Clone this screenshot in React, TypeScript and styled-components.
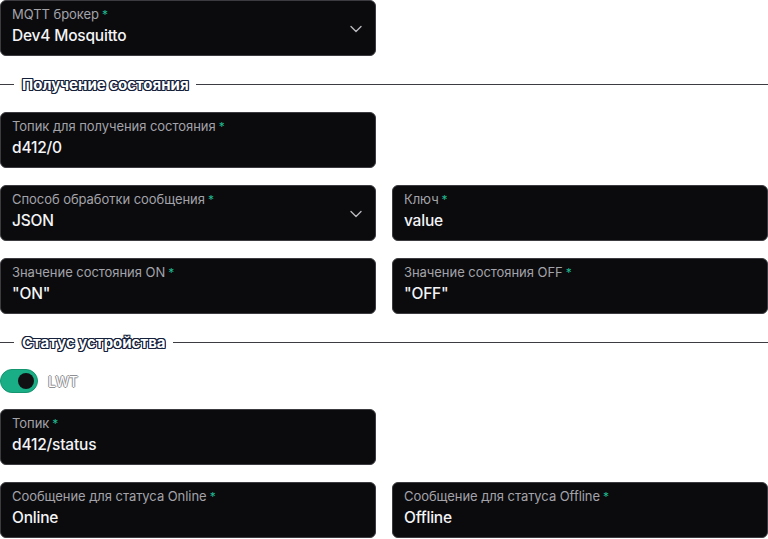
import React from "react";
import styled, { createGlobalStyle } from "styled-components";

const Global = createGlobalStyle`
  html, body { margin: 0; padding: 0; background: #ffffff; }
  body { font-family: Inter, "Noto Sans", sans-serif; }
`;

const Page = styled.div`
  width: 768px;
  display: flex;
  flex-direction: column;
`;

const Row = styled.div`
  display: grid;
  grid-template-columns: 376px 376px;
  column-gap: 16px;
  margin-bottom: 17px;
`;

const Field = styled.div`
  position: relative;
  box-sizing: border-box;
  height: 56px;
  background: #0b0b0e;
  border: 1px solid #3b3b40;
  border-radius: 6px;
  padding: 5px 11px 0 11px;
  display: flex;
  flex-direction: column;
`;

const Label = styled.div`
  font-size: 13px;
  line-height: 17px;
  color: #a3a3a9;
  letter-spacing: -0.05px;
  white-space: nowrap;
`;

const Star = styled.span`
  color: #1fb98e;
  margin-left: 3px;
  font-size: 12px;
`;

const Value = styled.div`
  margin-top: 3px;
  font-size: 15.5px;
  line-height: 20px;
  font-weight: 500;
  color: #f4f4f6;
  letter-spacing: -0.2px;
`;

const Chevron = styled.svg`
  position: absolute;
  right: 12px;
  top: 21px;
  width: 14px;
  height: 14px;
`;

const Section = styled.div`
  display: flex;
  align-items: center;
  height: 22px;
  margin-bottom: 17px;
`;

const Line = styled.div<{ $grow?: boolean }>`
  height: 1px;
  background: #3c3c42;
  width: 14px;
  flex: ${(p) => (p.$grow ? "1" : "none")};
`;

const SectionTitle = styled.div`
  padding: 0 7px 0 8px;
  font-size: 15px;
  font-weight: 700;
  letter-spacing: 0px;
  color: #ffffff;
  white-space: nowrap;
  text-shadow: -1px 0 #15203a, 1px 0 #15203a, 0 1px #15203a, 0 -1px #15203a,
    1px 1px #15203a, -1px -1px #15203a, 1px -1px #15203a, -1px 1px #15203a;
`;

const ToggleRow = styled.div`
  display: flex;
  align-items: center;
  gap: 10px;
  height: 24px;
  margin-top: -1px;
  margin-bottom: 16px;
`;

const Toggle = styled.div`
  position: relative;
  width: 38px;
  height: 24px;
  border-radius: 12px;
  background: #1aae86;
  box-sizing: border-box;
  border: 1px solid #14946f;
`;

const Knob = styled.div`
  position: absolute;
  right: 3px;
  top: 3px;
  width: 16px;
  height: 16px;
  border-radius: 50%;
  background: #111114;
`;

const ToggleLabel = styled.div`
  font-size: 14px;
  color: #ffffff;
  letter-spacing: -0.3px;
  text-shadow: -1px 0 #8f8f94, 1px 0 #8f8f94, 0 1px #8f8f94, 0 -1px #8f8f94;
`;

const ChevronIcon = () => (
  <Chevron viewBox="0 0 14 14" fill="none">
    <path d="M2 4.5 L7 9.5 L12 4.5" stroke="#b9b9be" strokeWidth="1.4" strokeLinecap="round" strokeLinejoin="round" />
  </Chevron>
);

const F = ({ label, value, select }: { label: string; value: string; select?: boolean }) => (
  <Field>
    <Label>
      {label}
      <Star>*</Star>
    </Label>
    <Value>{value}</Value>
    {select && <ChevronIcon />}
  </Field>
);

export default function App() {
  return (
    <Page>
      <Global />
      <Row>
        <F label="MQTT брокер" value="Dev4 Mosquitto" select />
      </Row>
      <Section>
        <Line />
        <SectionTitle>Получение состояния</SectionTitle>
        <Line $grow />
      </Section>
      <Row>
        <F label="Топик для получения состояния" value="d412/0" />
      </Row>
      <Row>
        <F label="Способ обработки сообщения" value="JSON" select />
        <F label="Ключ" value="value" />
      </Row>
      <Row>
        <F label="Значение состояния ON" value={'"ON"'} />
        <F label="Значение состояния OFF" value={'"OFF"'} />
      </Row>
      <Section>
        <Line />
        <SectionTitle>Статус устройства</SectionTitle>
        <Line $grow />
      </Section>
      <ToggleRow>
        <Toggle>
          <Knob />
        </Toggle>
        <ToggleLabel>LWT</ToggleLabel>
      </ToggleRow>
      <Row>
        <F label="Топик" value="d412/status" />
      </Row>
      <Row>
        <F label="Сообщение для статуса Online" value="Online" />
        <F label="Сообщение для статуса Offline" value="Offline" />
      </Row>
    </Page>
  );
}
